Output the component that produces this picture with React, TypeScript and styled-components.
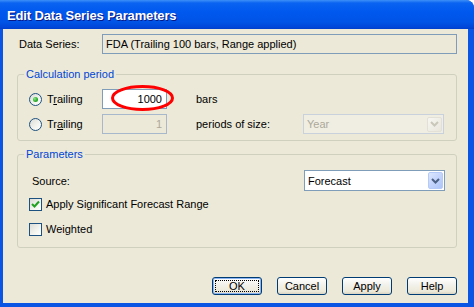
import React from "react";
import styled, { createGlobalStyle } from "styled-components";

const GlobalStyle = createGlobalStyle`
  html, body {
    margin: 0;
    padding: 0;
    background: #ffffff;
  }
  body {
    font-family: "Liberation Sans", Arial, sans-serif;
    font-size: 11px;
    color: #000000;
  }
`;

const Window = styled.div`
  width: 474px;
  height: 307px;
  display: flex;
  flex-direction: column;
  background: #0b55e4;
  border-top-right-radius: 8px;
  overflow: hidden;
  box-sizing: border-box;
`;

const TitleBar = styled.div`
  height: 29px;
  flex: none;
  display: flex;
  align-items: center;
  padding: 2px 0 0 7px;
  box-sizing: border-box;
  background: linear-gradient(
    to bottom,
    #3d8ff7 0px,
    #0a63f1 3px,
    #0058ee 12px,
    #0054e6 22px,
    #0047d9 27px,
    #003ec9 29px
  );
  color: #ffffff;
  font-weight: bold;
  font-size: 13px;
  letter-spacing: -0.15px;
  text-shadow: 1px 1px 0 #0a1883;
`;

const Body = styled.div`
  flex: 1;
  display: flex;
  flex-direction: column;
  margin: 0 6px 4px 3px;
  padding: 5px 11px 0 14px;
  background: #ece9d8;
`;

const DataRow = styled.div`
  display: flex;
  align-items: center;
  height: 20px;
`;

const DataLabel = styled.span`
  width: 83px;
  margin-left: 2px;
`;

const ReadBox = styled.div`
  flex: 1;
  height: 20px;
  box-sizing: border-box;
  border: 1px solid #7f9db9;
  padding-left: 3px;
  line-height: 18px;
  background: #ece9d8;
`;

const Group = styled.fieldset<{ $top: number }>`
  margin: ${(p) => p.$top}px 0 0 0;
  border: 1px solid #d0d0bf;
  border-radius: 3px;
  padding: 0 0 0 11px;
  min-width: 0;
`;

const Legend = styled.legend`
  color: #0046d5;
  padding: 0 2px;
  margin-left: -5px;
  line-height: 13px;
`;

const CalcGrid = styled.div`
  display: grid;
  grid-template-columns: 73px 94px 107px 141px;
  grid-auto-rows: 20px;
  row-gap: 5px;
  align-items: center;
  padding: 8px 0 6px 0;
`;

const Choice = styled.label`
  display: flex;
  align-items: center;
  gap: 5px;
`;

const Radio = styled.span<{ $checked?: boolean }>`
  position: relative;
  width: 13px;
  height: 13px;
  box-sizing: border-box;
  border: 1px solid #1c5180;
  border-radius: 50%;
  background: linear-gradient(135deg, #dcdcd7 0%, #f4f4f0 60%, #ffffff 100%);
  flex: none;

  &::after {
    content: "";
    display: ${(p) => (p.$checked ? "block" : "none")};
    position: absolute;
    left: 3px;
    top: 3px;
    width: 5px;
    height: 5px;
    border-radius: 50%;
    background: radial-gradient(circle at 35% 35%, #8ce88a 0%, #2dae2b 55%, #138c12 100%);
  }
`;

const FieldWrap = styled.div`
  position: relative;
  width: 65px;
  height: 20px;
`;

const Field = styled.div<{ $disabled?: boolean }>`
  width: 65px;
  height: 20px;
  box-sizing: border-box;
  border: 1px solid ${(p) => (p.$disabled ? "#a8b8cc" : "#7f9db9")};
  background: ${(p) => (p.$disabled ? "#ece9d8" : "#ffffff")};
  color: ${(p) => (p.$disabled ? "#aca899" : "#000000")};
  text-align: right;
  padding-right: 4px;
  line-height: 18px;
`;

const Circle = styled.svg`
  position: absolute;
  left: 9px;
  top: -4px;
  width: 63px;
  height: 26px;
  overflow: visible;
`;

const Combo = styled.div<{ $disabled?: boolean; $h: number }>`
  width: 141px;
  height: ${(p) => p.$h}px;
  box-sizing: border-box;
  border: 1px solid ${(p) => (p.$disabled ? "#c9d2dc" : "#7f9db9")};
  background: ${(p) => (p.$disabled ? "#f0eee3" : "#ffffff")};
  color: ${(p) => (p.$disabled ? "#aca899" : "#000000")};
  display: flex;
  align-items: center;
  justify-content: space-between;
  padding: 0 1px 0 3px;
`;

const ComboButton = styled.span<{ $disabled?: boolean }>`
  width: 15px;
  height: ${(p) => (p.$disabled ? 15 : 17)}px;
  box-sizing: border-box;
  border-radius: 2px;
  border: 1px solid ${(p) => (p.$disabled ? "#e3e1d7" : "#b6cafa")};
  background: ${(p) =>
    p.$disabled
      ? "linear-gradient(135deg, #f7f6f1, #e8e6dc)"
      : "linear-gradient(135deg, #dde7fe 0%, #c3d4fc 50%, #aec5f8 100%)"};
  display: flex;
  align-items: center;
  justify-content: center;
`;

const ParamBody = styled.div`
  padding: 9px 11px 8px 0;
  display: flex;
  flex-direction: column;
`;

const SourceRow = styled.div`
  display: flex;
  align-items: center;
  justify-content: space-between;
  height: 21px;
  padding-left: 3px;
`;

const CheckRow = styled.label<{ $top: number }>`
  display: flex;
  align-items: center;
  gap: 4px;
  height: 20px;
  margin-top: ${(p) => p.$top}px;
`;

const Box = styled.span`
  width: 13px;
  height: 13px;
  box-sizing: border-box;
  border: 1px solid #1c5180;
  background: linear-gradient(135deg, #dcdcd7 0%, #f4f4f0 60%, #ffffff 100%);
  display: flex;
  align-items: center;
  justify-content: center;
  flex: none;
`;

const ButtonRow = styled.div`
  display: flex;
  justify-content: flex-end;
  gap: 15px;
  margin-top: 29px;
`;

const Button = styled.button<{ $default?: boolean }>`
  position: relative;
  width: 50px;
  height: 18px;
  padding: 0;
  border: 1px solid #003c74;
  border-radius: 3px;
  background: linear-gradient(to bottom, #ffffff 0%, #f3f2ec 40%, #ece9d8 85%, #d8d2c2 100%);
  font-family: inherit;
  font-size: 11px;
  color: #000000;
  box-shadow: ${(p) => (p.$default ? "inset 0 0 0 1px #8cb4f2" : "none")};

  &::after {
    content: "";
    display: ${(p) => (p.$default ? "block" : "none")};
    position: absolute;
    inset: 2px;
    border: 1px dotted #000000;
  }
`;

const Arrow: React.FC<{ color: string }> = ({ color }) => (
  <svg width="9" height="6" viewBox="0 0 9 6">
    <path d="M1 1 L4.5 4.5 L8 1" fill="none" stroke={color} strokeWidth="2" />
  </svg>
);

export default function App() {
  return (
    <>
      <GlobalStyle />
      <Window>
        <TitleBar>Edit Data Series Parameters</TitleBar>
        <Body>
          <DataRow>
            <DataLabel>Data Series:</DataLabel>
            <ReadBox>FDA (Trailing 100 bars, Range applied)</ReadBox>
          </DataRow>

          <Group $top={14}>
            <Legend>Calculation period</Legend>
            <CalcGrid>
              <Choice>
                <Radio $checked />
                <span>
                  T<u>r</u>ailing
                </span>
              </Choice>
              <FieldWrap>
                <Field>1000</Field>
                <Circle viewBox="0 0 63 26">
                  <ellipse cx="31.5" cy="13" rx="30" ry="11.5" fill="none" stroke="#ff0000" strokeWidth="3" />
                </Circle>
              </FieldWrap>
              <span>bars</span>
              <span />

              <Choice>
                <Radio />
                <span>
                  Tr<u>a</u>iling
                </span>
              </Choice>
              <Field $disabled>1</Field>
              <span>periods of size:</span>
              <Combo $disabled $h={20}>
                <span>Year</span>
                <ComboButton $disabled>
                  <Arrow color="#c9c7ba" />
                </ComboButton>
              </Combo>
            </CalcGrid>
          </Group>

          <Group $top={7}>
            <Legend>Parameters</Legend>
            <ParamBody>
              <SourceRow>
                <span>Source:</span>
                <Combo $h={21}>
                  <span>Forecast</span>
                  <ComboButton>
                    <Arrow color="#4d6185" />
                  </ComboButton>
                </Combo>
              </SourceRow>
              <CheckRow $top={3}>
                <Box>
                  <svg width="9" height="9" viewBox="0 0 9 9">
                    <path d="M1 4 L3.5 6.5 L8 1.5" fill="none" stroke="#21a121" strokeWidth="2" />
                  </svg>
                </Box>
                <span>Apply Significant Forecast Range</span>
              </CheckRow>
              <CheckRow $top={5}>
                <Box />
                <span>Weighted</span>
              </CheckRow>
            </ParamBody>
          </Group>

          <ButtonRow>
            <Button $default>OK</Button>
            <Button>Cancel</Button>
            <Button>Apply</Button>
            <Button>Help</Button>
          </ButtonRow>
        </Body>
      </Window>
    </>
  );
}
